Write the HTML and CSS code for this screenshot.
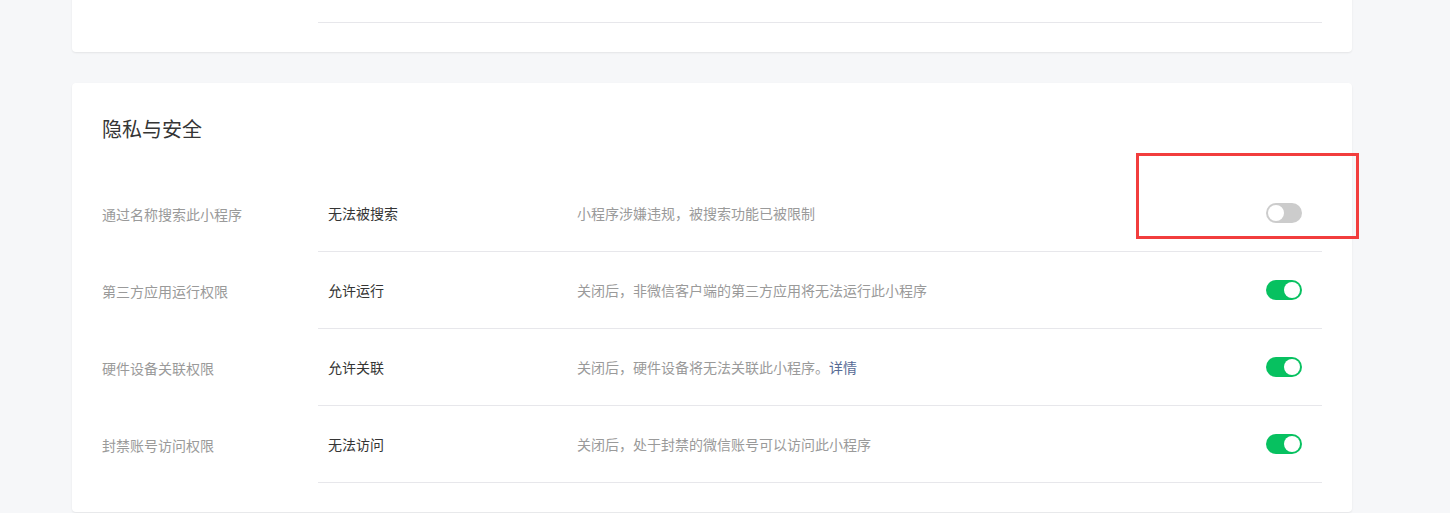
FILE: index.html
```html
<!DOCTYPE html>
<html lang="zh-CN">
<head>
    <meta charset="UTF-8">
    <title>设置 - 隐私与安全</title>
    <link rel="stylesheet" href="styles.css">
</head>
<body>
    <div class="page">
        <div class="card card-top">
            <div class="setting-row">
                <div class="setting-label"></div>
                <div class="setting-body"></div>
            </div>
        </div>

        <div class="card">
            <h2 class="card-title">隐私与安全</h2>

            <div class="setting-row">
                <div class="setting-label">通过名称搜索此小程序</div>
                <div class="setting-body">
                    <div class="setting-value">无法被搜索</div>
                    <div class="setting-desc">小程序涉嫌违规，被搜索功能已被限制</div>
                    <span class="switch"></span>
                </div>
            </div>
            <div class="setting-row">
                <div class="setting-label">第三方应用运行权限</div>
                <div class="setting-body">
                    <div class="setting-value">允许运行</div>
                    <div class="setting-desc">关闭后，非微信客户端的第三方应用将无法运行此小程序</div>
                    <span class="switch on"></span>
                </div>
            </div>
            <div class="setting-row">
                <div class="setting-label">硬件设备关联权限</div>
                <div class="setting-body">
                    <div class="setting-value">允许关联</div>
                    <div class="setting-desc">关闭后，硬件设备将无法关联此小程序。<a href="#" class="link">详情</a></div>
                    <span class="switch on"></span>
                </div>
            </div>
            <div class="setting-row">
                <div class="setting-label">封禁账号访问权限</div>
                <div class="setting-body">
                    <div class="setting-value">无法访问</div>
                    <div class="setting-desc">关闭后，处于封禁的微信账号可以访问此小程序</div>
                    <span class="switch on"></span>
                </div>
            </div>

            <!-- annotation box around the disabled switch -->
            <div class="highlight"></div>
        </div>
    </div>
</body>
</html>
```

FILE: styles.css
```css
html, body {
    margin: 0;
    padding: 0;
    height: 100%;
    overflow: hidden;
}
body {
    font-family: "Noto Sans CJK SC", "Liberation Sans", sans-serif;
    font-size: 14px;
    color: #353535;
    background-color: #f6f7f9;
}
.page {
    width: 1280px;
    margin: 0 0 0 72px;
}
.card {
    position: relative;
    background-color: #fff;
    border-radius: 4px;
    box-shadow: 0 1px 2px rgba(0, 0, 0, 0.08);
    padding: 30px 30px 29px;
}
.card-top {
    margin-top: -59px;
    padding-top: 0;
    margin-bottom: 31px;
}
.card-top .setting-row {
    height: 82px;
}
.card-title {
    margin: 0 0 30px;
    font-size: 20px;
    font-weight: normal;
    line-height: 32px;
    color: #353535;
}
.setting-row {
    display: flex;
    height: 77px;
}
.setting-label {
    width: 216px;
    flex-shrink: 0;
    display: flex;
    align-items: center;
    color: #9a9a9a;
}
.setting-body {
    flex: 1;
    display: flex;
    align-items: center;
    border-bottom: 1px solid #e7e7eb;
    padding: 0 20px 0 10px;
}
.setting-value {
    width: 249px;
    flex-shrink: 0;
    color: #353535;
}
.setting-desc {
    flex: 1;
    color: #9a9a9a;
}
.link {
    color: #576b95;
    text-decoration: none;
}
.switch {
    position: relative;
    width: 36px;
    height: 20px;
    border-radius: 10px;
    background-color: #cccccc;
    flex-shrink: 0;
}
.switch::after {
    content: "";
    position: absolute;
    top: 2px;
    left: 2px;
    width: 16px;
    height: 16px;
    border-radius: 50%;
    background-color: #fff;
}
.switch.on {
    background-color: #07c160;
}
.switch.on::after {
    left: 18px;
}
.highlight {
    position: absolute;
    left: 1064px;
    top: 70px;
    width: 217px;
    height: 80px;
    border: 3px solid #f23d3d;
}
```
